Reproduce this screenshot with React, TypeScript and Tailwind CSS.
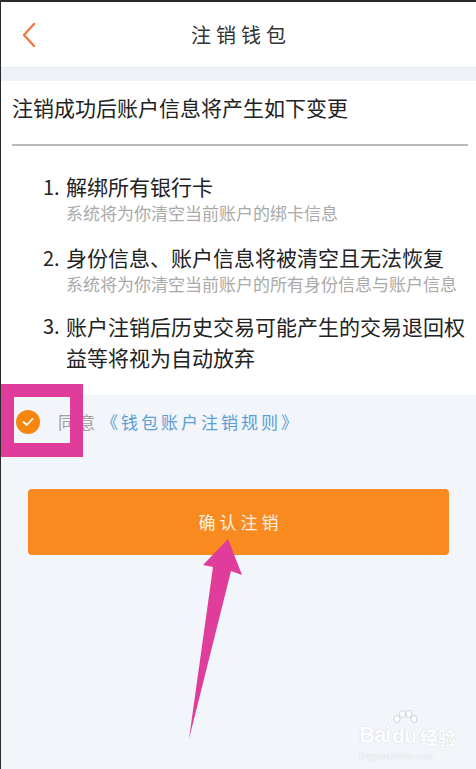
import React from "react";

const items = [
  { title: "解绑所有银行卡", sub: "系统将为你清空当前账户的绑卡信息" },
  { title: "身份信息、账户信息将被清空且无法恢复", sub: "系统将为你清空当前账户的所有身份信息与账户信息" },
  { title: "账户注销后历史交易可能产生的交易退回权益等将视为自动放弃", sub: "" },
];

const App: React.FC = () => {
  return (
    <div
      className="relative w-[476px] h-[769px] overflow-hidden bg-[#f2f5fa] border-t-2 border-l border-[#2a2a2a]"
      style={{ fontFamily: '"Noto Sans CJK SC", "Noto Sans", sans-serif' }}
    >
      {/* HEADER */}
      <div className="relative h-[66px] bg-white flex items-center justify-center border-b border-[#e6ebf2]">
        <svg className="absolute left-[20px] top-[20px]" width="16" height="26" viewBox="0 0 16 26">
          <path d="M13 2 L3 13 L13 24" fill="none" stroke="#ef7a45" strokeWidth="2.4" strokeLinecap="round" strokeLinejoin="round" />
        </svg>
        <span className="text-[20px] text-[#333] tracking-[5px] pl-[5px]">注销钱包</span>
      </div>

      <div className="h-[13px] bg-[#eef2f8]" />

      {/* CHANGES */}
      <div className="bg-white pl-[11px] pr-[8px] pt-[12px] pb-[22px]">
        <div className="text-[21px] leading-[28px] text-[#222]">注销成功后账户信息将产生如下变更</div>
        <div className="mt-[23px] h-[2px] bg-[#b8b8b8]" />
        <div className="mt-[26px] flex flex-col pl-[31px]">
          {items.map((it, i) => (
            <div key={i} className={`flex ${i > 0 ? (i === 1 ? "mt-[18px]" : "mt-[15px]") : ""}`}>
              <span className="w-[23px] shrink-0 text-[20px] leading-[31px] text-[#222] -mt-[1px]">{i + 1}.</span>
              <div className="flex flex-col">
                <span className={`text-[21px] text-[#222] ${i === 2 ? "leading-[31px]" : "leading-[28px]"}`}>{it.title}</span>
                {it.sub && (
                  <span className="mt-[1px] text-[17px] leading-[24px] text-[#a9a9a9] whitespace-nowrap">{it.sub}</span>
                )}
              </div>
            </div>
          ))}
        </div>
      </div>

      {/* AGREEMENT */}
      <div className="flex items-center h-[54px] pl-[15px]">
        <div className="w-[24px] h-[24px] rounded-full bg-[#f5870f] flex items-center justify-center">
          <svg width="12" height="10" viewBox="0 0 12 10">
            <path d="M1.5 5 L4.8 8 L10.5 2" fill="none" stroke="#fff" strokeWidth="1.8" strokeLinecap="round" strokeLinejoin="round" />
          </svg>
        </div>
        <span className="ml-[18px] text-[17px] tracking-[3px] text-[#a0a0a0]">同意</span>
        <span className="ml-[3px] text-[17px] tracking-[3px] text-[#5a9fd6]">《钱包账户注销规则》</span>
      </div>

      {/* BUTTON */}
      <div className="px-[27px] pt-[40px]">
        <button className="w-full h-[66px] rounded-[4px] bg-[#f88a1f] text-[#fdf0e4] text-[17px] tracking-[4px] pl-[4px]">
          确认注销
        </button>
      </div>

      {/* ANNOTATIONS */}
      <div className="absolute left-0 top-[382px] w-[82px] h-[73px] border-[13px] border-b-[14px] border-[#e03c9c]" />
      <svg className="absolute left-0 top-0 pointer-events-none" width="476" height="769" viewBox="0 0 476 769">
        <polygon points="227,537 241,573 230,569 188,737 212,565 202,563" fill="#e03c9c" />
      </svg>

      {/* WATERMARK */}
      <div className="absolute left-[358px] top-[712px] flex flex-col items-start text-white pointer-events-none [text-shadow:0_0_1px_#b8bcc4]">
        <svg className="absolute left-[32px] -top-[4px]" width="28" height="20" viewBox="0 0 28 20">
          <g fill="#fff" stroke="#c4c8d0" strokeWidth="0.8">
            <ellipse cx="6" cy="9" rx="3" ry="3.6" />
            <ellipse cx="11.5" cy="4" rx="3" ry="3.6" />
            <ellipse cx="18" cy="4" rx="3" ry="3.6" />
            <ellipse cx="23" cy="9" rx="3" ry="3.6" />
          </g>
        </svg>
        <div className="flex items-end leading-none mt-[10px]">
          <span className="text-[22px] font-bold tracking-[-1px]" style={{ fontFamily: '"Liberation Sans", sans-serif' }}>Bai</span>
          <span className="ml-[2px] text-[20px] font-bold" style={{ fontFamily: '"Liberation Sans", sans-serif' }}>du</span>
          <span className="ml-[3px] text-[18px] font-bold">经验</span>
        </div>
        <span className="mt-[4px] text-[10px] leading-[12px]" style={{ fontFamily: '"Liberation Serif", serif' }}>jingyan.baidu.com</span>
      </div>
    </div>
  );
};

export default App;
